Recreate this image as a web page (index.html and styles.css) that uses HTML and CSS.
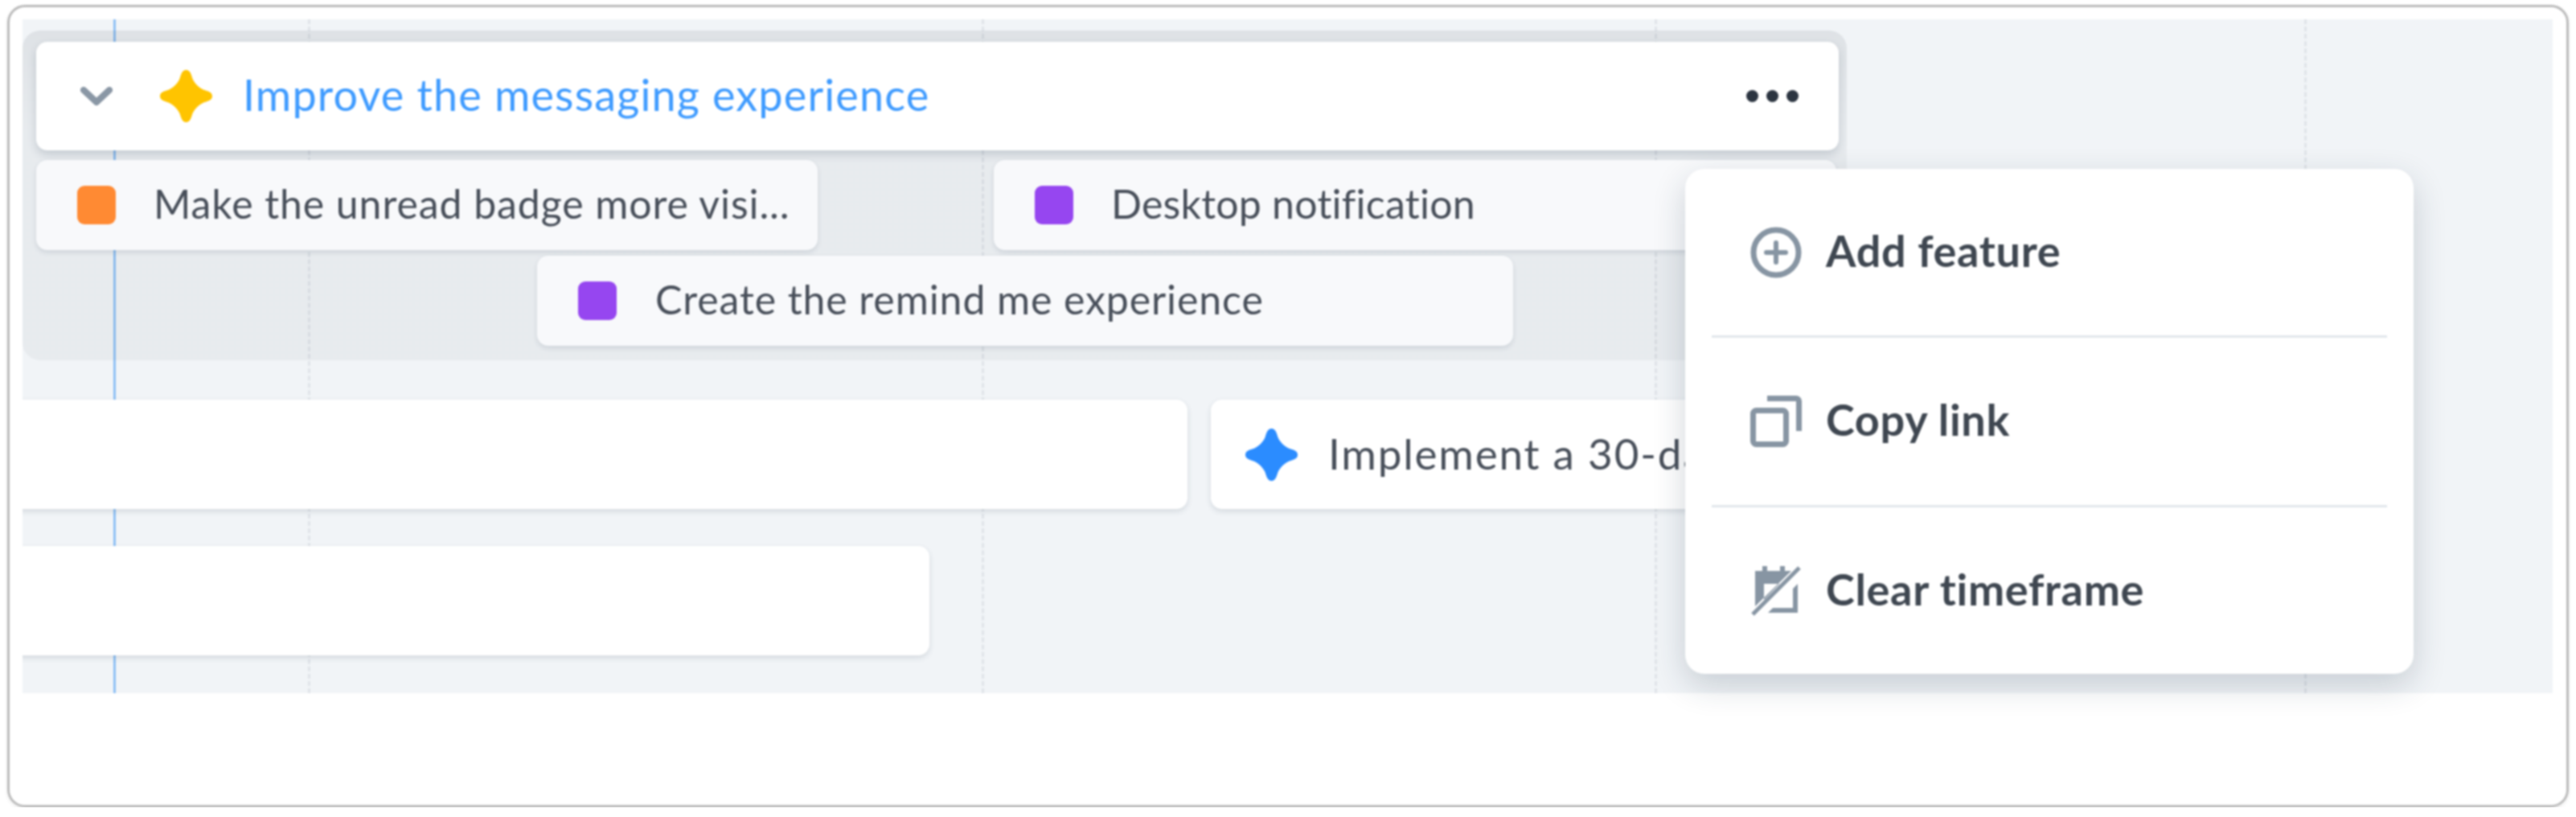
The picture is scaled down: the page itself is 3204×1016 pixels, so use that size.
FILE: index.html
```html
<!DOCTYPE html>
<html lang="en">
<head>
<meta charset="utf-8">
<title>Roadmap</title>
<link rel="stylesheet" href="styles.css">
</head>
<body>
<div class="frame">
  <div class="canvas">
    <i class="gridline today gl-today"></i>
    <i class="gridline gl-1"></i>
    <i class="gridline gl-2"></i>
    <i class="gridline gl-3"></i>
    <i class="gridline gl-4"></i>

    <section class="group">
      <header class="epic">
        <svg class="chevron" viewBox="0 0 40 24"><path d="M4 4l16 15L36 4" fill="none" stroke="#8a97a5" stroke-width="8" stroke-linecap="round" stroke-linejoin="round"/></svg>
        <svg class="star" viewBox="0 0 64 64"><path fill="#ffc400" d="M32 0C37 0 38 5 40 11C43 17 47 21 53 24C59 26 64 27 64 32C64 37 59 38 53 40C47 43 43 47 40 53C38 59 37 64 32 64C27 64 26 59 24 53C21 47 17 43 11 40C5 38 0 37 0 32C0 27 5 26 11 24C17 21 21 17 24 11C26 5 27 0 32 0Z"/></svg>
        <span class="epic-title">Improve the messaging experience</span>
        <span class="dots"><i></i><i></i><i></i></span>
      </header>
      <div class="sub-row">
        <div class="sub-card w-badge"><i class="swatch orange"></i><span class="label">Make the unread badge more visi...</span></div>
        <div class="sub-card w-desktop"><i class="swatch purple"></i><span class="label label-tight">Desktop notification</span></div>
      </div>
      <div class="sub-row second">
        <div class="sub-card w-remind"><i class="swatch purple"></i><span class="label">Create the remind me experience</span></div>
      </div>
    </section>

    <div class="bar-row first">
      <div class="bar w-a"></div>
      <div class="bar w-b">
        <svg class="star" viewBox="0 0 64 64"><path fill="#2b8cff" d="M32 0C37 0 38 5 40 11C43 17 47 21 53 24C59 26 64 27 64 32C64 37 59 38 53 40C47 43 43 47 40 53C38 59 37 64 32 64C27 64 26 59 24 53C21 47 17 43 11 40C5 38 0 37 0 32C0 27 5 26 11 24C17 21 21 17 24 11C26 5 27 0 32 0Z"/></svg>
        <span class="label label-wide">Implement a 30-day trial</span>
      </div>
    </div>
    <div class="bar-row last">
      <div class="bar w-c"></div>
    </div>
  </div>

  <nav class="menu">
    <div class="menu-item">
      <svg class="menu-icon" viewBox="0 0 64 64"><circle cx="32" cy="32" r="28" fill="none" stroke="#8795a3" stroke-width="7"/><path d="M32 20v24M20 32h24" stroke="#8795a3" stroke-width="6" stroke-linecap="round"/></svg>
      <span>Add feature</span>
    </div>
    <div class="menu-item">
      <svg class="menu-icon" viewBox="0 0 64 64"><rect x="3.5" y="18.5" width="41" height="42" rx="4" fill="none" stroke="#8795a3" stroke-width="7"/><path d="M21 3.5h36a3.500 3.500 0 0 1 3.500 3.500v37" fill="none" stroke="#8795a3" stroke-width="7"/></svg>
      <span>Copy link</span>
    </div>
    <div class="menu-item">
      <svg class="menu-icon" viewBox="0 0 64 64"><path fill="#8795a3" fill-rule="evenodd" d="M15 2h6v6h16V2h6v6h8L6 52V8h9zM17 24h19L17 44z"/><path fill="#8795a3" d="M59 24v36H22l6-6h25V30z"/><path d="M3 62L61 4" stroke="#8795a3" stroke-width="5"/></svg>
      <span>Clear timeframe</span>
    </div>
  </nav>
</div>
</body>
</html>
```

FILE: styles.css
```css
* { box-sizing: border-box; }

html, body { margin: 0; background: #fff; }

body {
  padding: 6px 9px 0;
  font-family: Lato, "Open Sans", sans-serif;
}

.frame {
  position: relative;
  height: 998px;
  padding: 15px 17px 0 16px;
  background: #fff;
  border: 3px solid #bcbcbc;
  border-radius: 22px;
  box-shadow: 0 2px 5px rgba(0, 0, 0, .08);
  filter: blur(1px);
}

.canvas {
  position: relative;
  height: 838px;
  padding-top: 14px;
  overflow: hidden;
  background: #f1f4f7;
}

.gridline {
  position: absolute;
  top: 0;
  bottom: 0;
  width: 0;
  border-left: 3px dashed #e0e4e9;
}
.today { border-left: 3px solid #8fc1f5; }
.gl-today { left: 113px; }
.gl-1 { left: 355px; }
.gl-2 { left: 1193px; }
.gl-3 { left: 2030px; }
.gl-4 { left: 2838px; }

.group {
  position: relative;
  width: 2269px;
  height: 410px;
  padding: 14px 10px 0 17px;
  background: linear-gradient(rgba(60, 70, 80, .1), rgba(60, 70, 80, .05) 130px);
  border-radius: 22px;
}

.epic {
  display: flex;
  align-items: center;
  height: 135px;
  padding: 0 50px 0 55px;
  background: #fff;
  border-radius: 14px;
  box-shadow: 0 5px 12px rgba(50, 70, 90, .2);
}

.chevron { width: 40px; height: 24px; flex: none; }

.star { width: 65px; height: 65px; flex: none; }
.epic .star { margin-left: 59px; }

.epic-title {
  position: relative;
  top: -2px;
  margin-left: 38px;
  font-size: 54px;
  letter-spacing: 1.15px;
  color: #3f9bff;
}

.dots {
  display: flex;
  gap: 10px;
  margin-left: auto;
}
.dots i {
  width: 15px;
  height: 15px;
  border-radius: 50%;
  background: #2b3440;
}

.sub-row {
  display: flex;
  gap: 219px;
  margin-top: 12px;
}
.sub-row.second {
  margin-top: 7px;
  padding-left: 623px;
}

.sub-card {
  display: flex;
  align-items: center;
  height: 112px;
  padding-left: 51px;
  background: #f8f9fb;
  border-radius: 14px;
  box-shadow: 0 3px 6px rgba(50, 70, 90, .14);
}
.w-badge { width: 972px; }
.w-desktop { width: 1048px; }
.w-remind { width: 1214px; }

.swatch {
  width: 48px;
  height: 48px;
  flex: none;
  margin-right: 47px;
  border-radius: 9px;
}
.orange { background: #ff8a33; }
.purple { background: #9646f0; }
.w-remind .swatch { margin-right: 48px; }

.label {
  position: relative;
  top: -2px;
  font-size: 50px;
  letter-spacing: .9px;
  color: #484f5a;
  white-space: nowrap;
}
.label-tight { letter-spacing: .25px; }
.label-wide { font-size: 53px; letter-spacing: 1.8px; }

.bar-row {
  position: relative;
  display: flex;
  gap: 29px;
  margin-left: -30px;
}
.bar-row.first { margin-top: 49px; }
.bar-row.last { margin-top: 46px; }

.bar {
  display: flex;
  align-items: center;
  height: 136px;
  background: #fff;
  border-radius: 14px;
  box-shadow: 0 3px 7px rgba(50, 70, 90, .15);
}
.w-a { width: 1479px; }
.w-b { width: 760px; padding-left: 43px; }
.w-b .star { margin-right: 38px; }
.w-c { width: 1158px; }

.menu {
  position: absolute;
  left: 2084px;
  top: 201px;
  display: flex;
  flex-direction: column;
  width: 906px;
  height: 628px;
  padding: 0 33px 0 33px;
  background: #fff;
  border-radius: 24px;
  box-shadow: 0 14px 40px rgba(30, 50, 70, .2);
}

.menu-item {
  display: flex;
  flex: 1;
  align-items: center;
  padding-left: 48px;
  font-size: 54px;
  font-weight: 700;
  letter-spacing: .7px;
  color: #3f4751;
  border-bottom: 3px solid #e2e7ec;
}
.menu-item:last-child { border-bottom: 0; }
.menu-item span {
  position: relative;
  top: -2px;
}

.menu-icon {
  width: 64px;
  height: 64px;
  flex: none;
  margin-right: 30px;
}
```
